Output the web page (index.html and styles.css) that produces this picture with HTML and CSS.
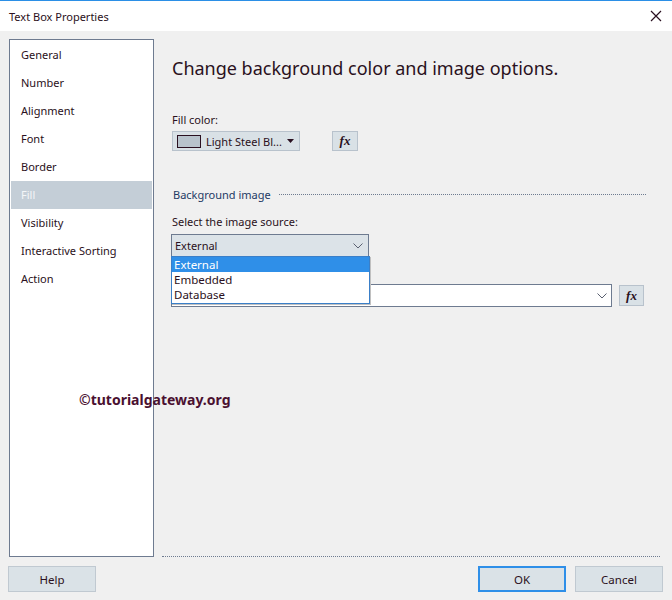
FILE: index.html
```html
<!DOCTYPE html>
<html>
<head>
<meta charset="utf-8">
<link rel="stylesheet" href="styles.css">
</head>
<body>
<div class="dialog">
  <div class="titlebar">
    <span class="title">Text Box Properties</span>
    <svg class="close" width="12" height="12" viewBox="0 0 12 12"><path d="M1 1L11 11M11 1L1 11" stroke="#2a1020" stroke-width="1.2"/></svg>
  </div>
  <div class="main">
    <ul class="nav">
      <li>General</li>
      <li>Number</li>
      <li>Alignment</li>
      <li>Font</li>
      <li>Border</li>
      <li class="sel">Fill</li>
      <li>Visibility</li>
      <li>Interactive Sorting</li>
      <li>Action</li>
    </ul>
    <div class="content">
      <h1 class="heading">Change background color and image options.</h1>
      <div class="label fill-label">Fill color:</div>
      <div class="fill-row">
        <div class="colorbtn"><span class="swatch"></span><span class="ctext">Light Steel Bl...</span><svg width="7" height="4" viewBox="0 0 7 4"><path d="M0 0H7L3.5 4Z" fill="#2a1020"/></svg></div>
        <div class="fx">fx</div>
      </div>
      <div class="group">
        <span class="group-title">Background image</span>
        <span class="group-line"></span>
      </div>
      <div class="label src-label">Select the image source:</div>
      <div class="select-wrap">
        <div class="select">External<svg class="chev" width="10" height="6" viewBox="0 0 10 6"><path d="M0.5 0.5L5 5L9.5 0.5" fill="none" stroke="#5a6070" stroke-width="1"/></svg></div>
        <div class="dropdown">
          <div class="opt active">External</div>
          <div class="opt">Embedded</div>
          <div class="opt">Database</div>
        </div>
      </div>
      <div class="combo-row">
        <div class="combo"><svg class="chev" width="10" height="6" viewBox="0 0 10 6"><path d="M0.5 0.5L5 5L9.5 0.5" fill="none" stroke="#5a6070" stroke-width="1"/></svg></div>
        <div class="fx fx2">fx</div>
      </div>
      <div class="watermark">©tutorialgateway.org</div>
    </div>
  </div>
  <div class="footer">
    <button class="btn">Help</button>
    <span class="spacer"></span>
    <button class="btn ok">OK</button>
    <button class="btn">Cancel</button>
  </div>
</div>
</body>
</html>
```
FILE: styles.css
```css
* { box-sizing: border-box; }
html, body { margin: 0; padding: 0; }
body {
  width: 672px;
  height: 600px;
  background: #f0f0f0;
  font-family: "Noto Sans", "Open Sans", sans-serif;
  font-size: 11px;
  color: #2a1020;
  overflow: hidden;
}
.dialog { width: 672px; height: 600px; display: flex; flex-direction: column; }
.titlebar {
  height: 31px;
  flex: none;
  background: #fff;
  border-top: 1px solid #2b8fe6;
  display: flex;
  align-items: center;
  padding: 0 10px 0 9px;
}
.title { flex: 1; font-size: 11px; }
.main {
  display: flex;
  height: 526px;
  flex: none;
  padding: 8px 0 0 9px;
}
.nav {
  list-style: none;
  margin: 0;
  padding: 1px 1px 0 1px;
  width: 145px;
  height: 518px;
  background: #fff;
  border: 1px solid #6e7b90;
}
.nav li {
  height: 28px;
  line-height: 28px;
  padding-left: 10px;
}
.nav .sel { background: #c4ced7; color: #f4f6f8; }
.content {
  position: relative;
  flex: 1;
  margin: 0 12px 0 8px;
  padding-left: 10px;
  border-bottom: 1px dotted #6e7b90;
}
.heading {
  margin: 16px 0 0 0;
  font-size: 18px;
  font-weight: normal;
  line-height: 26px;
}
.label { line-height: 16px; }
.fill-label { margin-top: 31px; }
.fill-row { display: flex; gap: 32px; margin-top: 3px; }
.colorbtn {
  width: 128px;
  height: 20px;
  border: 1px solid #b8c2cc;
  background: #d9e1e6;
  display: flex;
  align-items: center;
  padding-left: 4px;
  white-space: nowrap;
}
.swatch { width: 24px; height: 13px; border: 1px solid #2a1020; background: #b8c3cc; flex: none; }
.ctext { margin: 0 5px 0 5px; }
.fx {
  width: 26px;
  height: 20px;
  border: 1px solid #b8c2cc;
  background: #d9e1e6;
  font-family: "Liberation Serif", serif;
  font-style: italic;
  font-weight: bold;
  font-size: 13px;
  display: flex;
  align-items: center;
  justify-content: center;
}
.group { display: flex; align-items: center; margin-top: 35px; height: 16px; }
.group-title { color: #1e3a64; padding-left: 1px; }
.group-line { flex: 1; border-top: 1px dotted #6e7b90; margin: 1px 14px 0 8px; }
.src-label { margin-top: 12px; }
.select-wrap { position: relative; margin-top: 4px; }
.select {
  width: 198px;
  height: 23px;
  margin-left: -1px;
  border: 1px solid #6e7b90;
  background: #dce3e8;
  padding-left: 3px;
  display: flex;
  align-items: center;
  justify-content: space-between;
  padding-right: 5px;
}
.dropdown {
  position: absolute;
  left: -1px;
  top: 22px;
  width: 199px;
  background: #fff;
  border: 1px solid #3a7fc8;
  z-index: 2;
  padding: 0 0 1px 0;
  box-shadow: 1px 1px 0 #c0c0c0;
}
.opt { height: 15px; line-height: 15px; padding-left: 2px; font-size: 11.5px; }
.opt.active { background: #2f8fe8; color: #fff; }
.combo-row { display: flex; gap: 7px; margin-top: 27px; }
.combo {
  width: 441px;
  height: 23px;
  margin-left: -1px;
  background: #fff;
  border: 1px solid #6e7b90;
  display: flex;
  align-items: center;
  justify-content: flex-end;
  padding-right: 4px;
}
.fx2 { width: 25px; height: 21px; margin-top: 1px; }
.watermark {
  position: absolute;
  left: -83px;
  top: 351px;
  font-family: "Noto Sans", sans-serif;
  font-weight: bold;
  font-size: 14px;
  color: #4a1030;
}
.footer {
  display: flex;
  padding: 9px 9px 0 8px;
  gap: 9px;
}
.spacer { flex: 1; }
.btn {
  width: 88px;
  height: 26px;
  border: 1px solid #c0c9d1;
  background: #dae2e7;
  font-family: "Noto Sans", sans-serif;
  font-size: 11.5px;
  color: #2a1020;
  padding: 0;
}
.btn.ok { border: 2px solid #2f8fe8; }
```
